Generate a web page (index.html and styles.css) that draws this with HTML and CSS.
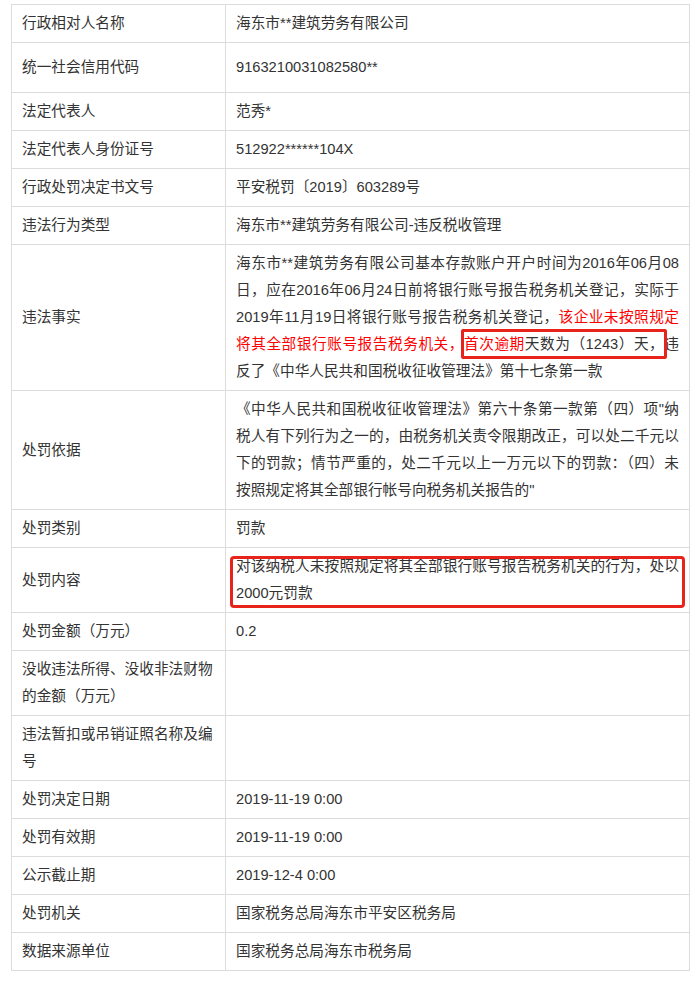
FILE: index.html
```html
<!DOCTYPE html>
<html lang="zh-CN">
<head>
  <meta charset="UTF-8">
  <meta name="viewport" content="width=device-width, initial-scale=1.0">
  <title>行政处罚信息</title>
  <link rel="stylesheet" href="styles.css">
</head>
<body>
<div class="page">
  <table class="info-table">
    <colgroup>
      <col class="col-label">
      <col class="col-value">
    </colgroup>
    <tr>
      <td>行政相对人名称</td>
      <td>海东市**建筑劳务有限公司</td>
    </tr>
    <tr class="row-tall">
      <td>统一社会信用代码</td>
      <td>9163210031082580**</td>
    </tr>
    <tr>
      <td>法定代表人</td>
      <td>范秀*</td>
    </tr>
    <tr>
      <td>法定代表人身份证号</td>
      <td>512922******104X</td>
    </tr>
    <tr>
      <td>行政处罚决定书文号</td>
      <td>平安税罚〔2019〕603289号</td>
    </tr>
    <tr>
      <td>违法行为类型</td>
      <td>海东市**建筑劳务有限公司-违反税收管理</td>
    </tr>
    <tr>
      <td>违法事实</td>
      <td class="long">海东市**建筑劳务有限公司基本存款账户开户时间为2016年06月08日，应在2016年06月24日前将银行账号报告税务机关登记，实际于2019年11月19日将银行账号报告税务机关登记，<span class="red">该企业未按照规定将其全部银行账号报告税务机关，</span><span class="mark-start red">首次逾期</span><span class="mark-end">天数为（1243）天，</span>违反了《中华人民共和国税收征收管理法》第十七条第一款</td>
    </tr>
    <tr>
      <td>处罚依据</td>
      <td class="long">《中华人民共和国税收征收管理法》第六十条第一款第（四）项"纳税人有下列行为之一的，由税务机关责令限期改正，可以处二千元以下的罚款；情节严重的，处二千元以上一万元以下的罚款：（四）未按照规定将其全部银行帐号向税务机关报告的"</td>
    </tr>
    <tr>
      <td>处罚类别</td>
      <td>罚款</td>
    </tr>
    <tr>
      <td>处罚内容</td>
      <td class="long boxed">对该纳税人未按照规定将其全部银行账号报告税务机关的行为，处以2000元罚款</td>
    </tr>
    <tr>
      <td>处罚金额（万元）</td>
      <td>0.2</td>
    </tr>
    <tr>
      <td>没收违法所得、没收非法财物的金额（万元）</td>
      <td></td>
    </tr>
    <tr>
      <td>违法暂扣或吊销证照名称及编号</td>
      <td></td>
    </tr>
    <tr>
      <td>处罚决定日期</td>
      <td>2019-11-19 0:00</td>
    </tr>
    <tr>
      <td>处罚有效期</td>
      <td>2019-11-19 0:00</td>
    </tr>
    <tr>
      <td>公示截止期</td>
      <td>2019-12-4 0:00</td>
    </tr>
    <tr>
      <td>处罚机关</td>
      <td>国家税务总局海东市平安区税务局</td>
    </tr>
    <tr>
      <td>数据来源单位</td>
      <td>国家税务总局海东市税务局</td>
    </tr>
  </table>
</div>
</body>
</html>
```

FILE: styles.css
```css
body {
  margin: 0;
  padding: 0;
  background: #fff;
  color: #333;
  font-family: "Liberation Sans", "Noto Sans CJK SC", sans-serif;
  font-size: 14.6667px;
}
.page {
  padding: 4px 0 0 11px;
}
.info-table {
  width: 678px;
  table-layout: fixed;
  border-collapse: collapse;
}
.col-label {
  width: 214px;
}
.col-value {
  width: 464px;
}
.info-table td {
  border: 1px solid #dcdcdc;
  padding: 5px 10px;
  line-height: 27px;
  text-align: left;
  vertical-align: middle;
}
.row-tall td {
  height: 39px;
}
.info-table td.long {
  text-align: justify;
}
.red {
  color: #ff0000;
}
/* annotation box drawn round "首次逾期天数为（1243）天，" */
.mark-start,
.mark-end {
  position: relative;
}
.mark-start::before,
.mark-end::before {
  content: "";
  position: absolute;
  top: -7px;
  bottom: -7px;
  border: 3px solid #e8231c;
}
.mark-start::before {
  left: -3px;
  right: 0;
  border-right: 0;
  border-radius: 3px 0 0 3px;
}
.mark-end::before {
  left: 0;
  right: -3px;
  border-left: 0;
  border-radius: 0 3px 3px 0;
}
.boxed {
  position: relative;
}
.boxed::after {
  content: "";
  position: absolute;
  top: 8px;
  right: 4px;
  bottom: 4px;
  left: 4px;
  border: 3px solid #e8231c;
  border-radius: 4px;
}
```
